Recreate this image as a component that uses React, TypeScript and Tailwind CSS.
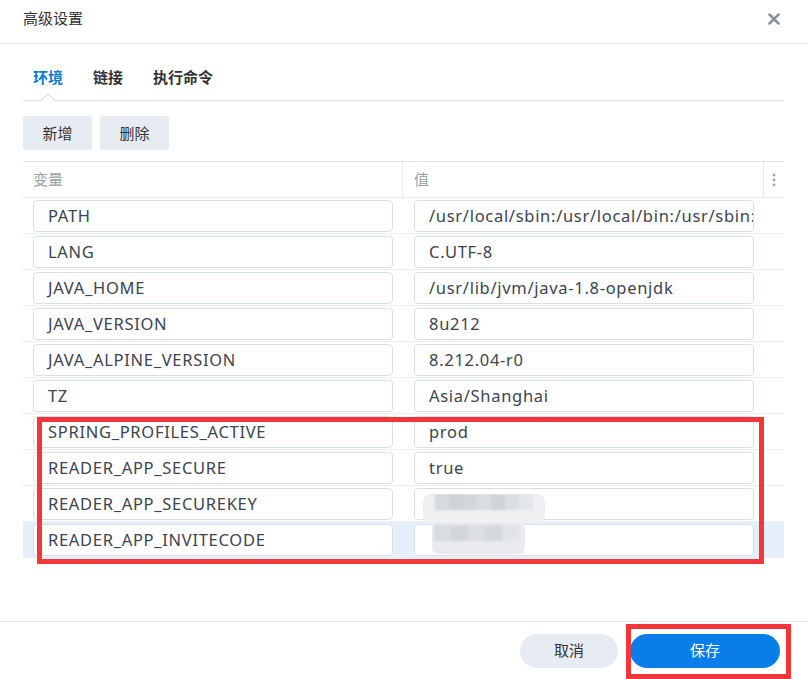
import { X } from "lucide-react";

const rows = [
  { name: "PATH", value: "/usr/local/sbin:/usr/local/bin:/usr/sbin:/usr/bin:/sbin:/bin" },
  { name: "LANG", value: "C.UTF-8" },
  { name: "JAVA_HOME", value: "/usr/lib/jvm/java-1.8-openjdk" },
  { name: "JAVA_VERSION", value: "8u212" },
  { name: "JAVA_ALPINE_VERSION", value: "8.212.04-r0" },
  { name: "TZ", value: "Asia/Shanghai" },
  { name: "SPRING_PROFILES_ACTIVE", value: "prod" },
  { name: "READER_APP_SECURE", value: "true" },
  { name: "READER_APP_SECUREKEY", value: "" },
  { name: "READER_APP_INVITECODE", value: "" },
];

const font = "font-['Noto_Sans','Noto_Sans_CJK_SC',sans-serif]";

// mosaic shades for the blurred secrets
const topShades = ["#d6d9dd", "#cfd2d6", "#d2d5d9", "#dadde0", "#d0d3d7", "#dcdfe2", "#e4e6e9"];
const lowShades = ["#d9dce0", "#d3d6da", "#dcdee1", "#d5d8dc", "#e2e4e7"];

function Field({ text }: { text: string }) {
  return (
    <div className="flex h-[32px] items-center overflow-hidden rounded-[4px] border border-[#d9dfe7] bg-white pl-[14px] pr-1 pt-[2px]">
      <span className="whitespace-nowrap text-[16.5px] tracking-[0.7px] text-[#3c4450]">{text}</span>
    </div>
  );
}

function Mosaic({ shades, w }: { shades: string[]; w: number }) {
  return (
    <div className="flex blur-[1px]">
      {shades.map((c, i) => (
        <div key={i} className="h-[16px]" style={{ width: w, backgroundColor: c }} />
      ))}
    </div>
  );
}

export default function App() {
  return (
    <div className={`${font} relative flex h-[679px] w-[808px] flex-col bg-white text-[#333]`}>
      <div className="flex h-[44px] items-start justify-between border-b border-[#e3e5e8] pl-[23px] pr-[25px] pt-[7px]">
        <span className="text-[15px] text-[#333]">高级设置</span>
        <X className="mt-[3px] h-[18px] w-[18px] text-[#8a9199]" strokeWidth={3.4} />
      </div>

      <div className="flex-1 pl-[23px] pr-[24px]">
        <div className="relative mt-[21px] flex h-[36px] items-start gap-[30px] border-b border-[#dcdfe3] pl-[10px] pt-[1px] text-[15px] font-bold">
          <span className="text-[#0b7bd4]">环境</span>
          <span className="text-[#333]">链接</span>
          <span className="text-[#333]">执行命令</span>
          <div className="absolute left-[20px] top-[30px] h-[10px] w-[10px] rotate-45 border-l border-t border-[#dcdfe3] bg-white" />
        </div>

        <div className="mt-[15px] flex gap-[8px]">
          <button className="h-[34px] w-[69px] rounded-[3px] bg-[#e7ecf3] text-[15px] text-[#333]">新增</button>
          <button className="h-[34px] w-[69px] rounded-[3px] bg-[#e7ecf3] text-[15px] text-[#333]">删除</button>
        </div>

        <div className="mt-[11px] border-t border-[#dfe3e8]">
          <div className="grid h-[36px] grid-cols-[380px_361px_20px] border-b border-[#e6e9ed] text-[15px] text-[#9aa0a8]">
            <div className="flex items-center border-r border-[#e6e9ed] pl-[10px]">变量</div>
            <div className="flex items-center border-r border-[#e6e9ed] pl-[11px]">值</div>
            <div className="flex items-center justify-center text-[#a0a6ad]">
              <svg width="4" height="14" viewBox="0 0 4 14">
                <circle cx="2" cy="2" r="1.4" fill="currentColor" />
                <circle cx="2" cy="7" r="1.4" fill="currentColor" />
                <circle cx="2" cy="12" r="1.4" fill="currentColor" />
              </svg>
            </div>
          </div>
          {rows.map((r, i) => (
            <div
              key={r.name}
              className={`grid h-[36px] grid-cols-[380px_361px_20px] items-center border-b border-[#eceef1] ${
                i === rows.length - 1 ? "bg-[#e6f0fb]" : ""
              }`}
            >
              <div className="pl-[10px] pr-[10px]">
                <Field text={r.name} />
              </div>
              <div className="pl-[11px] pr-[10px]">
                <Field text={r.value} />
              </div>
              <div />
            </div>
          ))}
        </div>
      </div>

      <div className="flex h-[58px] items-center justify-end gap-[12px] border-t border-[#e3e5e8] pr-[28px]">
        <button className="h-[34px] w-[98px] rounded-full bg-[#e7ecf3] text-[15px] text-[#333]">取消</button>
        <button className="h-[34px] w-[150px] rounded-full bg-[#0a7ee8] text-[15px] text-white">保存</button>
      </div>

      {/* blurred secret values */}
      <div className="pointer-events-none absolute left-[423px] top-[494px] flex h-[29px] w-[122px] flex-col overflow-hidden rounded-[8px] bg-[#eef0f2] pl-[12px] blur-[0.5px]">
        <Mosaic shades={topShades} w={14} />
      </div>
      <div className="pointer-events-none absolute left-[432px] top-[523px] flex h-[31px] w-[93px] flex-col overflow-hidden rounded-[6px] bg-[#e9ebee] pl-[2px] pt-[2px] blur-[0.5px]">
        <Mosaic shades={lowShades} w={17} />
      </div>

      <div className="pointer-events-none absolute left-[37px] top-[417px] h-[147px] w-[727px] border-[5px] border-[#f2363c]" />
      <div className="pointer-events-none absolute left-[626px] top-[624px] h-[55px] w-[165px] border-[5px] border-[#f2363c]" />
    </div>
  );
}
